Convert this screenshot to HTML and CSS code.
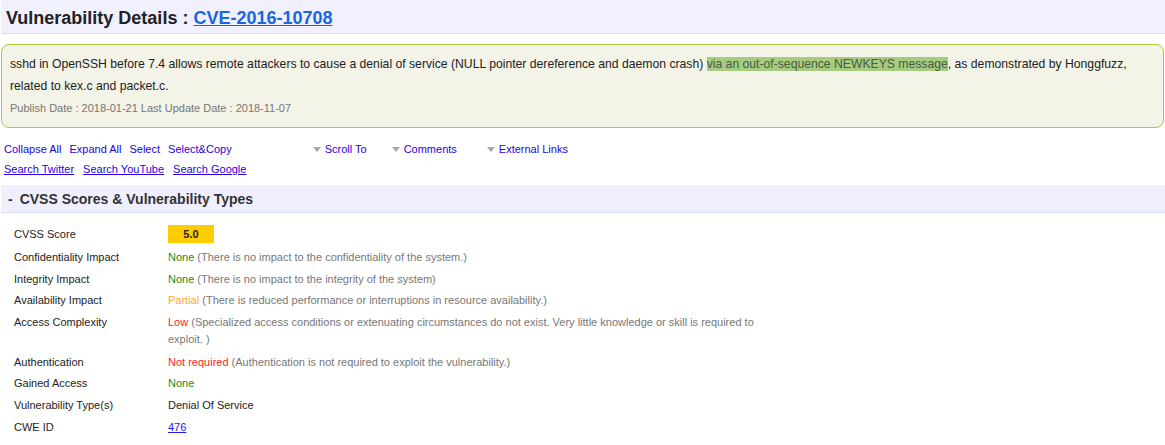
FILE: index.html
```html
<!DOCTYPE html>
<html>
<head>
<meta charset="utf-8">
<link rel="stylesheet" href="styles.css">
</head>
<body>
<div class="page-header">
  <h1 class="page-title">Vulnerability Details : <a href="#" class="cve-link">CVE-2016-10708</a></h1>
</div>
<div class="summary">
  <div class="summary-text">sshd in OpenSSH before 7.4 allows remote attackers to cause a denial of service (NULL pointer dereference and daemon crash) <span class="hl">via an out-of-sequence NEWKEYS message</span>, as demonstrated by Honggfuzz, related to kex.c and packet.c.</div>
  <div class="dates">Publish Date : 2018-01-21 Last Update Date : 2018-11-07</div>
</div>
<div class="toolbar">
  <div class="tool-row">
    <a href="#" class="tool">Collapse All</a>
    <a href="#" class="tool">Expand All</a>
    <a href="#" class="tool">Select</a>
    <a href="#" class="tool">Select&amp;Copy</a>
    <a href="#" class="tool drop drop-scroll"><span class="tri"></span>Scroll To</a>
    <a href="#" class="tool drop drop-comments"><span class="tri"></span>Comments</a>
    <a href="#" class="tool drop drop-ext"><span class="tri"></span>External Links</a>
  </div>
  <div class="tool-row">
    <a href="#" class="tool ul">Search Twitter</a>
    <a href="#" class="tool ul">Search YouTube</a>
    <a href="#" class="tool ul">Search Google</a>
  </div>
</div>
<div class="section-header">
  <h2 class="section-title"><span class="minus">-</span>CVSS Scores &amp; Vulnerability Types</h2>
</div>
<div class="details">
  <div class="row first">
    <div class="label">CVSS Score</div>
    <div class="value"><span class="score">5.0</span></div>
  </div>
  <div class="row">
    <div class="label">Confidentiality Impact</div>
    <div class="value"><span class="ok">None</span> <span class="expl">(There is no impact to the confidentiality of the system.)</span></div>
  </div>
  <div class="row">
    <div class="label">Integrity Impact</div>
    <div class="value"><span class="ok">None</span> <span class="expl">(There is no impact to the integrity of the system)</span></div>
  </div>
  <div class="row">
    <div class="label">Availability Impact</div>
    <div class="value"><span class="partial">Partial</span> <span class="expl">(There is reduced performance or interruptions in resource availability.)</span></div>
  </div>
  <div class="row multi">
    <div class="label">Access Complexity</div>
    <div class="value"><span class="bad">Low</span> <span class="expl">(Specialized access conditions or extenuating circumstances do not exist. Very little knowledge or skill is required to exploit. )</span></div>
  </div>
  <div class="row">
    <div class="label">Authentication</div>
    <div class="value"><span class="bad">Not required</span> <span class="expl">(Authentication is not required to exploit the vulnerability.)</span></div>
  </div>
  <div class="row">
    <div class="label">Gained Access</div>
    <div class="value"><span class="ok">None</span></div>
  </div>
  <div class="row">
    <div class="label">Vulnerability Type(s)</div>
    <div class="value">Denial Of Service</div>
  </div>
  <div class="row">
    <div class="label">CWE ID</div>
    <div class="value"><a href="#" class="cwe">476</a></div>
  </div>
</div>
</body>
</html>
```
FILE: styles.css
```css
html, body {
  margin: 0;
  padding: 0;
  background: #ffffff;
  font-family: "Liberation Sans", Arial, sans-serif;
  color: #222222;
}

.page-header {
  margin-left: 1px;
  height: 33px;
  background: #f0f0ff;
  border-bottom: 1px solid #dcdcf6;
  display: flex;
  align-items: center;
}

.page-title {
  margin: 0 0 0 5px;
  font-size: 18px;
  font-weight: bold;
  color: #222222;
  line-height: 22px;
  padding-top: 3px;
}

.cve-link {
  color: #1a66e0;
  text-decoration: underline;
}

.summary {
  margin: 10px 1px 0 1px;
  border: 1px solid #b0c83a;
  border-radius: 8px;
  background: #f3f3e8;
  padding: 8px 8px 9px 8px;
}

.summary-text {
  font-size: 12.2px;
  line-height: 22px;
  color: #222222;
}

.hl {
  background: #a5cc80;
  color: #4b5a40;
}

.dates {
  font-size: 11px;
  line-height: 20px;
  color: #777777;
  margin-top: 1px;
}

.toolbar {
  margin: 11px 0 0 4px;
}

.tool-row {
  display: flex;
  height: 20px;
  align-items: center;
}

.tool {
  font-size: 11px;
  color: #2a00e0;
  text-decoration: none;
  margin-right: 8px;
  white-space: nowrap;
}

.tool.ul {
  text-decoration: underline;
  margin-right: 9px;
}

.drop {
  display: inline-flex;
  align-items: center;
}

.drop-scroll { margin-left: 73px; margin-right: 25px; }
.drop-comments { margin-right: 30px; }

.tri {
  width: 0;
  height: 0;
  border-left: 4.5px solid transparent;
  border-right: 4.5px solid transparent;
  border-top: 5px solid #a8a8a8;
  margin-right: 4px;
  margin-top: 1px;
}

.section-header {
  margin: 6px 0 0 1px;
  height: 27px;
  background: #efefff;
  border-bottom: 1px solid #dcdcf6;
  display: flex;
  align-items: center;
}

.section-title {
  margin: 0 0 0 7px;
  font-size: 14px;
  font-weight: bold;
  color: #333333;
  line-height: 18px;
  padding-top: 1px;
}

.minus {
  margin-right: 7px;
}

.details {
  padding: 12px 0 0 14px;
}

.row {
  display: flex;
  font-size: 11px;
  line-height: 17px;
  padding: 2.3px 0 2.3px 0;
}

.row.first {
  padding: 0 0 4px 0;
  align-items: center;
}

.row.multi {
  padding-bottom: 3.5px;
}

.label {
  width: 154px;
  flex: none;
  color: #222222;
}

.value {
  width: 590px;
  color: #222222;
}

.score {
  display: inline-block;
  width: 46px;
  height: 18px;
  line-height: 18px;
  background: #ffcc00;
  text-align: center;
  font-weight: bold;
  color: #222222;
}

.ok { color: #228b22; }
.partial { color: #f7ab3a; }
.bad { color: #ff2222; }
.expl { color: #777777; }

.cwe {
  color: #1a1aee;
  text-decoration: underline;
}
```
